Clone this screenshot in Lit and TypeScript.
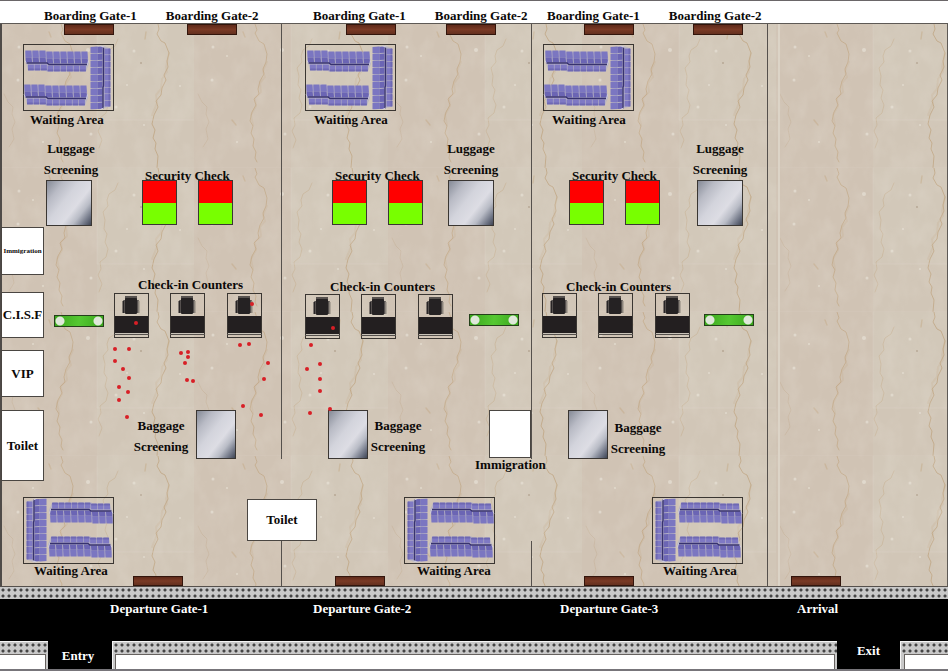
import { LitElement, html, css, svg } from "lit";
import { customElement, property } from "lit/decorators.js";
import { styleMap } from "lit/directives/style-map.js";

type Kind = "waiting" | "arrivals-waiting" | "security" | "counter" | "luggage" | "baggage" | "belt";
interface Item { kind: Kind; x: number; y: number }
interface Label { text: string; x: number; y: number; lines?: boolean }
interface Room { text: string; x: number; y: number; w: number; h: number; small?: boolean }
interface Hall {
  name: string;
  gates: string[];
  gatePad: number;
  exitName: string;
  exitPad: number;
  topDoors: number[];
  bottomDoor: number;
  items: Item[];
  labels: Label[];
  rooms: Room[];
  people: [number, number][];
}

const at = (x: number, y: number) => styleMap({ left: `${x}px`, top: `${y}px` });

const row = (kind: Kind, y: number, ...xs: number[]): Item[] => xs.map((x) => ({ kind, x, y }));

/* Positions are measured from the top left corner of each hall. */
const halls: Hall[] = [
  {
    name: "Hall 1",
    gates: ["Boarding Gate-1", "Boarding Gate-2"],
    gatePad: 44,
    exitName: "Departure Gate-1",
    exitPad: 110,
    topDoors: [64, 187],
    bottomDoor: 133,
    items: [
      ...row("waiting", 20, 23),
      ...row("luggage", 156, 46),
      ...row("security", 156, 142, 198),
      ...row("belt", 291, 54),
      ...row("counter", 269, 114, 170, 227),
      ...row("baggage", 386, 196),
      ...row("arrivals-waiting", 473, 23),
    ],
    labels: [
      { text: "Waiting Area", x: 30, y: 88 },
      { text: "Luggage Screening", x: 42, y: 114, lines: true },
      { text: "Security Check", x: 145, y: 144 },
      { text: "Check-in Counters", x: 138, y: 253 },
      { text: "Baggage Screening", x: 132, y: 391, lines: true },
      { text: "Waiting Area", x: 34, y: 539 },
    ],
    rooms: [
      { text: "Immigration", x: 1, y: 203, w: 43, h: 48, small: true },
      { text: "C.I.S.F", x: 1, y: 268, w: 43, h: 46 },
      { text: "VIP", x: 1, y: 326, w: 43, h: 47 },
      { text: "Toilet", x: 1, y: 386, w: 43, h: 71 },
      { text: "Toilet", x: 247, y: 475, w: 70, h: 42 },
    ],
    people: [
      [252, 280], [136, 299], [115, 325], [129, 325], [115, 337], [123, 345], [129, 354],
      [119, 363], [128, 368], [119, 376], [127, 393], [181, 329], [188, 328], [188, 333],
      [185, 339], [187, 356], [193, 357], [240, 321], [249, 320], [268, 339], [264, 355],
      [243, 382], [261, 391],
    ],
  },
  {
    name: "Hall 2",
    gates: ["Boarding Gate-1", "Boarding Gate-2"],
    gatePad: 32,
    exitName: "Departure Gate-2",
    exitPad: 32,
    topDoors: [65, 165],
    bottomDoor: 54,
    items: [
      ...row("waiting", 20, 24),
      ...row("luggage", 156, 167),
      ...row("security", 156, 51, 107),
      ...row("counter", 270, 24, 80, 137),
      ...row("belt", 290, 188),
      ...row("baggage", 386, 47),
      ...row("arrivals-waiting", 473, 123),
    ],
    labels: [
      { text: "Waiting Area", x: 33, y: 88 },
      { text: "Luggage Screening", x: 161, y: 114, lines: true },
      { text: "Security Check", x: 54, y: 144 },
      { text: "Check-in Counters", x: 49, y: 255 },
      { text: "Baggage Screening", x: 88, y: 391, lines: true },
      { text: "Immigration", x: 194, y: 433 },
      { text: "Waiting Area", x: 136, y: 539 },
    ],
    rooms: [{ text: "", x: 208, y: 386, w: 42, h: 48 }],
    people: [
      [52, 304], [30, 321], [39, 340], [26, 345], [39, 355], [39, 367], [29, 389], [49, 385],
    ],
  },
  {
    name: "Hall 3",
    gates: ["Boarding Gate-1", "Boarding Gate-2"],
    gatePad: 16,
    exitName: "Departure Gate-3",
    exitPad: 29,
    topDoors: [53, 162],
    bottomDoor: 53,
    items: [
      ...row("waiting", 20, 12),
      ...row("luggage", 156, 166),
      ...row("security", 156, 38, 94),
      ...row("counter", 269, 11, 67, 124),
      ...row("belt", 290, 173),
      ...row("baggage", 386, 37),
      ...row("arrivals-waiting", 473, 121),
    ],
    labels: [
      { text: "Waiting Area", x: 21, y: 88 },
      { text: "Luggage Screening", x: 160, y: 114, lines: true },
      { text: "Security Check", x: 41, y: 144 },
      { text: "Check-in Counters", x: 35, y: 255 },
      { text: "Baggage Screening", x: 78, y: 393, lines: true },
      { text: "Waiting Area", x: 132, y: 539 },
    ],
    rooms: [],
    people: [],
  },
  {
    name: "Arrival hall",
    gates: [],
    gatePad: 0,
    exitName: "Arrival",
    exitPad: 30,
    topDoors: [],
    bottomDoor: 24,
    items: [],
    labels: [],
    rooms: [],
    people: [],
  },
];

/* Nine linked seats seen from above: tall backs, a dark hinge, short seats. */
const bench = (stepped: boolean) => {
  const seat = 7;
  const drop = stepped ? 1 : 0;
  return svg`
    <path d="M0 1 H21 V${1 + drop} H62 L64 ${12 + drop} L61 ${20 + drop} H21 V20 H3 L1 12 Z" fill="#b9b5c4"/>
    ${Array.from({ length: 9 }, (_, i) => {
      const dy = i < 3 ? 0 : drop;
      const x = i * seat;
      return svg`
        <path d="M${x + 0.3} ${dy} h6.2 l.4 7 h-6.4 z" fill="#7b76c1"/>
        <path d="M${x + 0.6} ${dy + 7} h6 l.5 5 h-6.300 z" fill="#6b65b4"/>
        <rect x=${3 + i * 6.5} y=${14 + dy} width="5.900" height="5" fill="#7f79c4"/>
        <rect x=${3 + i * 6.5} y=${18 + dy} width="5.900" height="2" rx=".6" fill="#6e68b3"/>`;
    })}
    <path d=${`M1 12.500 H22 L24 ${13 + drop} H62`} fill="none" stroke="#37326f" stroke-width="1.400"/>
    <path d="M0 10 l1.500 3 M63.500 10 l-1 4" stroke="#d3d0df" stroke-width=".9"/>`;
};

const seats = html`<svg class="art" viewBox="0 0 91 67" aria-hidden="true">
  <g transform="translate(2 6.500)">${bench(true)}</g>
  <g transform="translate(1 40.500)">${bench(true)}</g>
  <g transform="translate(67.500 65.500) rotate(-90)">${bench(false)}</g>
</svg>`;

const desk = html`<svg class="art" viewBox="0 0 35 45" aria-hidden="true">
  <rect x="9" y="7" width="16" height="13" rx="1" fill="#55504e"/>
  <rect x="8.500" y="8" width="1.500" height="12" fill="#282526"/>
  <rect x="24" y="8" width="1.500" height="12" fill="#8a837b"/>
  <rect x="11" y="3" width="12" height="3" fill="#57524f"/>
  <rect x="11" y="5" width="12" height="16" rx="1" fill="#252223"/>
  <rect x="1" y="23" width="33" height="17" fill="#231f20"/>
  <rect x="1" y="40" width="33" height="1" fill="#c9c3b8"/>
  <rect x="0" y="41" width="35" height="1" fill="#55504c"/>
</svg>`;

const marble = html`<svg class="marble" aria-hidden="true">
  <defs>
    <filter id="grain" x="0" y="0" width="100%" height="100%">
      <feTurbulence type="fractalNoise" baseFrequency="0.060 0.040" numOctaves="3" seed="4"/>
      <feColorMatrix values="0 0 0 0 .93  0 0 0 0 .9  0 0 0 0 .84  1.600 0 0 0 -.620"/>
    </filter>
    <pattern id="tile" width="194" height="144" patternUnits="userSpaceOnUse">
      <rect width="194" height="144" fill="#d1c6b7"/>
      <rect width="97" height="144" fill="#cdbfae" opacity=".3"/>
      <rect x="97" width="97" height="96" fill="#d6cdbd" opacity=".3"/>
      <g fill="none" stroke-linejoin="round" stroke-linecap="round">
        <path d="M61 0l2 6-2 3 4 8 5 3 3 10-1 8-3 7 1 5-4 7-2 8 1 5-5 5 2 6-4 7-2 9 3 5-2 7 3 6-1 7 3 6-1 6 2 4"
          stroke="#b9996f" stroke-width="1" opacity=".5"/>
        <path d="M73 38l-4 9 2 6-5 6 1 9-6 6 1 8-5 9 2 10" stroke="#c4a988" stroke-width="2" opacity=".24"/>
        <path d="M158 0l1 5-2 5 4 7 4 2 4 10-2 8 1 6-4 8 2 5-4 8-1 7-5 6 2 6-4 8-2 9 3 6-2 8 3 5-1 6 3 7-1 12"
          stroke="#b9996f" stroke-width="1" opacity=".6"/>
        <path d="M169 29l-3 14 1 5-5 7-1 10-5 6 1 8-5 12" stroke="#c4a988" stroke-width="2" opacity=".24"/>
        <path d="M118 15l-3 7-6 4-2 6 1 6-5 6 2 8-1 9 3 5-2 8 3 7-2 8-6 5 1 7-3 6 4 9-3 8"
          stroke="#bfa27d" stroke-width="1" opacity=".38"/>
        <path d="M4 70l4 8 5 5-1 7 3 8-3 7 2 10-5 8" stroke="#bea588" stroke-width="1" opacity=".35"/>
        <path d="M49 8l2 5M146 8l-1 7M38 96l4 5" stroke="#bc9d72" stroke-width="1.500" opacity=".35"/>
      </g>
      <g fill="#e6e0d4" opacity=".7">
        <circle cx="19" cy="23" r="1.500"/><circle cx="18" cy="56" r="1.500"/><circle cx="33" cy="32" r="1"/>
        <circle cx="88" cy="26" r="2"/><circle cx="116" cy="83" r="1.500"/><circle cx="134" cy="27" r="1.500"/>
        <circle cx="180" cy="62" r="1"/><circle cx="43" cy="118" r="1"/><circle cx="91" cy="110" r="1.500"/>
        <circle cx="144" cy="101" r="1"/><circle cx="127" cy="61" r="1"/>
      </g>
      <circle cx="141" cy="39" r=".8" fill="#a2907a"/>
      <path d="M0 144H194M97 96H194M97 0V96" stroke="#ddd5c8" stroke-width="1" opacity=".3"/>
    </pattern>
  </defs>
  <rect width="100%" height="100%" fill="url(#tile)"/>
  <rect width="100%" height="100%" filter="url(#grain)" opacity=".16"/>
</svg>`;

@customElement("airport-hall")
class AirportHall extends LitElement {
  @property({ attribute: false }) hall!: Hall;

  static styles = css`
    :host { display: block; position: relative; box-sizing: border-box; min-width: 0; }
    .thing { position: absolute; box-sizing: border-box; border: 1px solid #3a3632; }
    .art { display: block; position: absolute; left: -1px; top: -1px; overflow: visible; }
    .waiting, .arrivals-waiting { width: 91px; height: 67px; }
    .waiting .art, .arrivals-waiting .art { width: 91px; height: 67px; }
    .arrivals-waiting .art { transform: rotate(180deg); }
    .counter { width: 35px; height: 45px; }
    .counter .art { width: 35px; height: 45px; }
    .security {
      width: 35px; height: 45px;
      background: linear-gradient(#ff0000 50%, #5c8a00 50%, #78ff00 52%);
    }
    .luggage, .baggage {
      background: linear-gradient(128deg, #858a96 0%, #b9bbc5 22%, #d3d4dc 42%, #dddde4 62%, #b9bcc6 76%, #6f7585 90%, #3f4554 100%);
    }
    .luggage { width: 46px; height: 46px; }
    .baggage { width: 40px; height: 49px; }
    .belt {
      width: 50px; height: 12px; border-color: #24401a;
      background:
        radial-gradient(circle at 5px 5px, #dfe8da 4px, transparent 5px),
        radial-gradient(circle at 43px 5px, #dfe8da 4px, transparent 5px),
        linear-gradient(100deg, #3aa51c, #55c832 50%, #3aa51c);
    }
    .door {
      position: absolute; box-sizing: border-box; width: 50px; height: 11px;
      border: 1px solid #32150c;
      background: linear-gradient(#5f2a1a, #7a3a25 50%, #64301f);
    }
    .door.top { top: 0; }
    .door.bottom { bottom: 0; height: 10px; }
    .label {
      position: absolute; margin: 0; white-space: nowrap; text-align: center;
      font-size: 13px; line-height: 16px;
    }
    .label.lines { width: 58px; white-space: normal; line-height: 21px; }
    .room {
      position: absolute; box-sizing: border-box; border: 1px solid #4a4642; background: #fff;
      display: flex; align-items: center; justify-content: center; font-size: 13px; line-height: 16px;
    }
    .room.small { font-size: 7px; }
    .person { position: absolute; width: 4px; height: 4px; margin: -2px; border-radius: 2px; background: #d81f26; }
  `;

  render() {
    const h = this.hall;
    return html`
      ${h.topDoors.map((x) => html`<div class="door top" style=${styleMap({ left: `${x}px` })}></div>`)}
      <div class="door bottom" style=${styleMap({ left: `${h.bottomDoor}px` })}></div>
      ${h.rooms.map((r) => html`<div class="room ${r.small ? "small" : ""}"
        style=${styleMap({ left: `${r.x}px`, top: `${r.y}px`, width: `${r.w}px`, height: `${r.h}px` })}>${r.text}</div>`)}
      ${h.items.map((i) => html`<div class="thing ${i.kind}" style=${at(i.x, i.y)}>
        ${i.kind === "waiting" || i.kind === "arrivals-waiting" ? seats : i.kind === "counter" ? desk : ""}
      </div>`)}
      ${h.labels.map((l) => html`<p class="label ${l.lines ? "lines" : ""}" style=${at(l.x, l.y)}>${l.text}</p>`)}
      ${h.people.map(([x, y]) => html`<i class="person" style=${at(x, y)}></i>`)}
    `;
  }
}

@customElement("app-root")
class AppRoot extends LitElement {
  static styles = css`
    :host {
      display: flex; flex-direction: column; box-sizing: border-box; min-height: 100vh;
      border-top: 1px solid #6a6668; border-bottom: 2px solid #77757a;
      background: #fff; color: #0b0908; overflow: hidden;
      font-family: "Liberation Serif", serif; font-weight: bold; font-size: 13px; line-height: 16px;
    }
    .columns { display: grid; grid-template-columns: 281fr 250fr 236fr 181fr; }
    .gates { height: 22px; border-bottom: 1px solid #5d5955; }
    .gate-names { display: flex; gap: 29px; padding-top: 7px; min-width: 0; white-space: nowrap; }
    .floor { position: relative; flex: 1; min-height: 562px; }
    .marble { position: absolute; inset: 0; width: 100%; height: 100%; }
    .cell { position: relative; display: grid; min-width: 0; }
    .cell.split::before, .cell.split::after, .cell.full::after {
      content: ""; position: absolute; right: -1px; width: 1px; background: #55504c;
    }
    .cell.split::before { top: 0; height: 435px; }
    .cell.split::after { top: 517px; bottom: 0; }
    .cell.full::after { top: 0; bottom: 0; }
    .cell.first { z-index: 1; box-shadow: inset 2px 0 #4f4b48; }
    .cell.last { box-shadow: inset -1px 0 #5d5955; }
    .cell.last::before {
      content: ""; position: absolute; left: 11px; top: 0; bottom: 0; width: 2px; background: #dcd4c7;
    }
    .paving {
      background-color: #c8c8c8;
      background-image: radial-gradient(circle at 3px 3px, #454545 1px, transparent 2px);
      background-size: 6px 6px;
    }
    .curb { box-sizing: border-box; height: 13px; border-top: 1px solid #55504c; }
    .road { background: #000; color: #fff; }
    .exits { height: 42px; }
    .exit-name { padding-top: 2px; white-space: nowrap; min-width: 0; }
    .ramps { display: grid; grid-template-columns: 48px 64px 1fr 63px 48px; height: 28px; }
    .ramp { display: flex; flex-direction: column; background: #c8c8c8; border-top: 1px solid #f4f4f4; }
    .ramp .paving { height: 12px; }
    .lot { flex: 1; margin: 0 2px; background: #fff; border: 1px solid #66625f; border-bottom: 0; }
    .ramp.start .lot { margin-left: 0; border-left: 0; }
    .ramp.end .lot { margin-right: 0; margin-left: 3px; border-right: 0; }
    .ramp.end, .ramp.middle { border-left: 1px solid #f4f4f4; }
    .way { text-align: center; padding: 7px 4px 0 0; }
    .way.out { padding-top: 2px; padding-right: 0; }
  `;

  render() {
    return html`
      <header class="columns gates">
        ${halls.map((h) => html`<div class="gate-names" style=${styleMap({ paddingLeft: `${h.gatePad}px` })}>
          ${h.gates.map((g) => html`<span>${g}</span>`)}
        </div>`)}
      </header>
      <main class="columns floor">
        ${marble}
        ${halls.map((h, i) => html`<section aria-label=${h.name}
          class="cell ${i < 2 ? "split" : i === 2 ? "full" : "last"} ${i === 0 ? "first" : ""}">
          <airport-hall .hall=${h}></airport-hall>
        </section>`)}
      </main>
      <div class="paving curb"></div>
      <footer class="road">
        <div class="columns exits">
          ${halls.map((h) => html`<span class="exit-name" style=${styleMap({ paddingLeft: `${h.exitPad}px` })}>${h.exitName}</span>`)}
        </div>
        <div class="ramps">
          <div class="ramp start"><div class="paving"></div><div class="lot"></div></div>
          <div class="way">Entry</div>
          <div class="ramp middle"><div class="paving"></div><div class="lot"></div></div>
          <div class="way out">Exit</div>
          <div class="ramp end"><div class="paving"></div><div class="lot"></div></div>
        </div>
      </footer>
    `;
  }
}
